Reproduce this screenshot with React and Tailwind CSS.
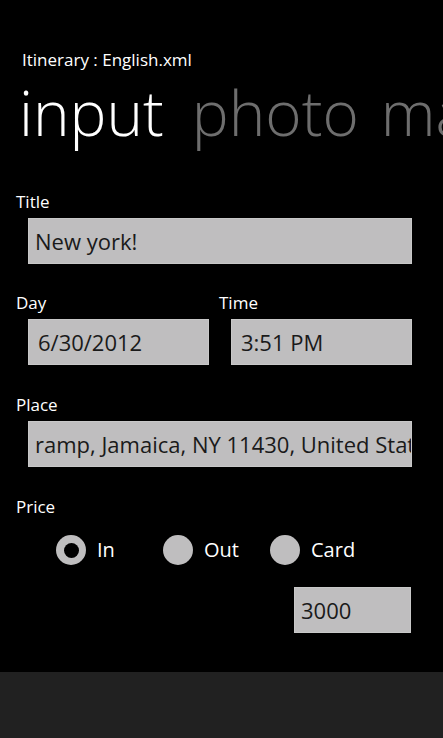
import React, { useState } from "react";

const font = { fontFamily: '"Open Sans", "Noto Sans", sans-serif' };

const Label = ({ children, className = "" }) => (
  <div className={`h-[20px] leading-[20px] text-[17px] text-white pl-[16px] ${className}`}>
    {children}
  </div>
);

const Box = ({ children, className = "" }) => (
  <div
    className={`h-[46px] bg-[#bfbebf] border border-[#c8c8c8] flex items-center overflow-hidden whitespace-nowrap text-[22px] text-[#1a1a1a] ${className}`}
  >
    {children}
  </div>
);

const Radio = ({ label, checked, onClick }) => (
  <button onClick={onClick} className="w-[107px] flex items-center gap-[11px] text-left">
    <span className="w-[30px] h-[30px] rounded-full bg-[#bfbebf] flex items-center justify-center">
      {checked && <span className="w-[15px] h-[15px] rounded-full bg-black" />}
    </span>
    <span className="text-[20px] text-white">{label}</span>
  </button>
);

export default function App() {
  const [price, setPrice] = useState("In");

  return (
    <div className="w-[443px] h-[738px] bg-black flex flex-col overflow-hidden" style={font}>
      <div className="flex-1 flex flex-col">
        {/* app title */}
        <div className="pt-[50px] pl-[22px] h-[70px] leading-[20px] text-[17px] text-white">
          Itinerary : English.xml
        </div>

        {/* pivot headers */}
        <div className="h-[90px] pl-[19px] whitespace-nowrap overflow-hidden text-[62px] leading-[84px] font-light">
          <span className="text-white">input</span>
          <span className="text-[#6e6e6e] ml-[28px]">photo</span>
          <span className="text-[#6e6e6e] ml-[22px]">map</span>
        </div>

        <div className="pt-[32px]">
          <Label>Title</Label>
          <Box className="mt-[6px] ml-[28px] mr-[31px] pl-[6px]">New york!</Box>

          <div className="mt-[29px] flex">
            <div className="w-[203px]">
              <Label>Day</Label>
              <Box className="mt-[6px] ml-[28px] w-[181px] h-[44px] pl-[9px]">6/30/2012</Box>
            </div>
            <div className="flex-1">
              <Label className="pl-[16px]">Time</Label>
              <Box className="mt-[6px] ml-[28px] mr-[31px] h-[44px] pl-[9px]">3:51 PM</Box>
            </div>
          </div>

          <Label className="mt-[30px]">Place</Label>
          <Box className="mt-[6px] ml-[28px] mr-[31px] pl-[6px]">
            ramp, Jamaica, NY 11430, United States
          </Box>

          <Label className="mt-[30px]">Price</Label>
          <div className="mt-[18px] pl-[56px] h-[30px] flex">
            {["In", "Out", "Card"].map((p) => (
              <Radio key={p} label={p} checked={price === p} onClick={() => setPrice(p)} />
            ))}
          </div>

          <div className="mt-[22px] flex justify-end pr-[32px]">
            <Box className="w-[117px] pl-[6px] text-[21px]">3000</Box>
          </div>
        </div>
      </div>

      {/* application bar */}
      <div className="h-[66px] bg-[#212121]" />
    </div>
  );
}
